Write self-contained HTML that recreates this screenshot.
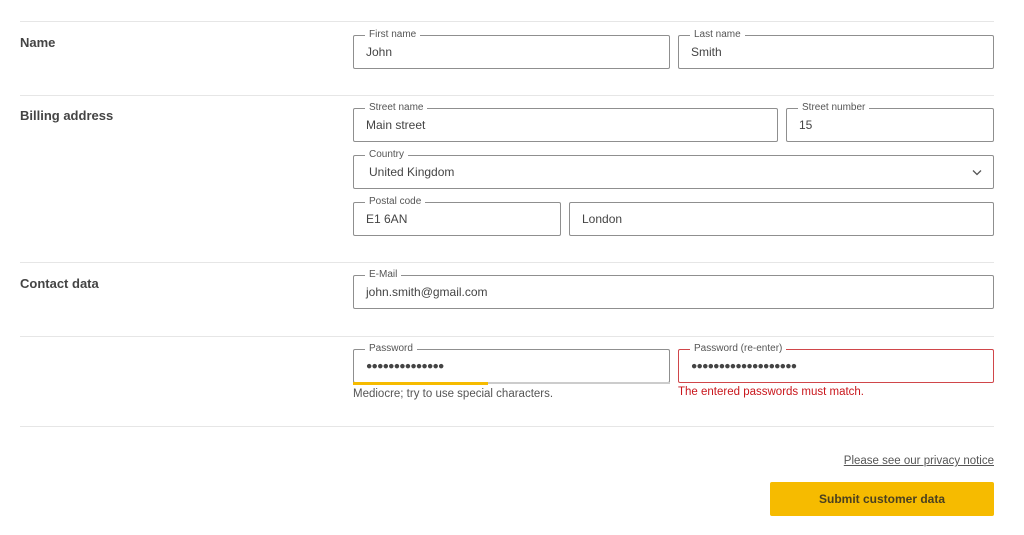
<!DOCTYPE html><html><head><style>
body{margin:0;width:1024px;height:535px;background:#fff;font-family:"Liberation Sans",sans-serif;position:relative;overflow:hidden}
.sep{position:absolute;left:20px;width:974px;height:1px;background:#e6e6e6}
.lab{position:absolute;left:20px;font-size:13px;font-weight:bold;color:#444}
.f{position:absolute;box-sizing:border-box;border:1px solid #8f8f8f;border-radius:2px;height:34px}
.f .l{position:absolute;top:-7px;left:11px;background:#fff;padding:0 4px;font-size:10px;color:#555;line-height:12px}
.f .v{position:absolute;left:12px;top:9px;font-size:12px;color:#444;line-height:15px}
.dots{letter-spacing:-0.8px;font-size:10.5px!important;top:9px!important}
</style></head><body>
<div class="sep" style="top:21px"></div>
<div class="sep" style="top:95px"></div>
<div class="sep" style="top:262px"></div>
<div class="sep" style="top:336px"></div>
<div class="sep" style="top:426px"></div>
<div class="lab" style="top:35px">Name</div>
<div class="lab" style="top:108px">Billing address</div>
<div class="lab" style="top:276px">Contact data</div>

<div class="f" style="left:353px;top:35px;width:317px"><span class="l">First name</span><span class="v">John</span></div>
<div class="f" style="left:678px;top:35px;width:316px"><span class="l">Last name</span><span class="v">Smith</span></div>
<div class="f" style="left:353px;top:108px;width:425px"><span class="l">Street name</span><span class="v">Main street</span></div>
<div class="f" style="left:786px;top:108px;width:208px"><span class="l">Street number</span><span class="v">15</span></div>
<div class="f" style="left:353px;top:155px;width:641px"><span class="l">Country</span><span class="v" style="left:15px">United Kingdom</span>
<svg style="position:absolute;right:11px;top:13px" width="10" height="7" viewBox="0 0 10 7"><path d="M1 1.5L5 5.5L9 1.5" fill="none" stroke="#555" stroke-width="1.3"/></svg></div>
<div class="f" style="left:353px;top:202px;width:208px"><span class="l">Postal code</span><span class="v">E1 6AN</span></div>
<div class="f" style="left:569px;top:202px;width:425px"><span class="v">London</span></div>
<div class="f" style="left:353px;top:275px;width:641px"><span class="l">E-Mail</span><span class="v">john.smith@gmail.com</span></div>
<div class="f" style="left:353px;top:349px;width:317px;border-bottom-color:#777"><span class="l">Password</span><span class="v dots">●●●●●●●●●●●●●●</span></div>
<div style="position:absolute;left:353px;top:382px;width:317px;height:2px;background:#ccc"></div>
<div style="position:absolute;left:353px;top:382px;width:135px;height:3px;background:#f6bb00"></div>
<div class="f" style="left:678px;top:349px;width:316px;border-color:#d0464a"><span class="l">Password (re-enter)</span><span class="v dots">●●●●●●●●●●●●●●●●●●●</span></div>
<div style="position:absolute;left:353px;top:388px;font-size:11.5px;color:#555">Mediocre; try to use special characters.</div>
<div style="position:absolute;left:678px;top:386px;font-size:11.5px;color:#c9161c">The entered passwords must match.</div>
<div style="position:absolute;right:30px;top:455px;font-size:11.5px;color:#555;text-decoration:underline">Please see our privacy notice</div>
<div style="position:absolute;left:770px;top:482px;width:224px;height:34px;background:#f6bb00;border-radius:2px;font-size:12px;font-weight:bold;color:#4a4020;text-align:center;line-height:34px">Submit customer data</div>
</body></html>
